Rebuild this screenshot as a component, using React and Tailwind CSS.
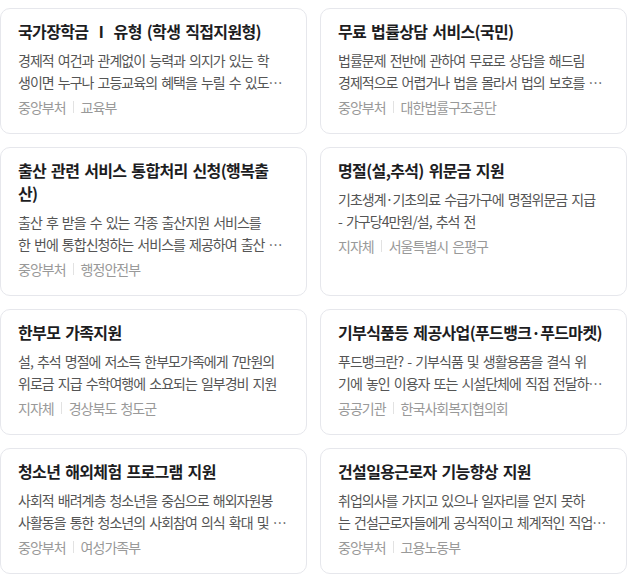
const cards = [
  {
    title: ["국가장학금 Ⅰ 유형 (학생 직접지원형)"],
    body: ["경제적 여건과 관계없이 능력과 의지가 있는 학", "생이면 누구나 고등교육의 혜택을 누릴 수 있도록 국가가 지원하는 장학금"],
    type: "중앙부처",
    org: "교육부",
  },
  {
    title: ["무료 법률상담 서비스(국민)"],
    body: ["법률문제 전반에 관하여 무료로 상담을 해드림", "경제적으로 어렵거나 법을 몰라서 법의 보호를 받지 못하는 국민"],
    type: "중앙부처",
    org: "대한법률구조공단",
  },
  {
    title: ["출산 관련 서비스 통합처리 신청(행복출", "산)"],
    body: ["출산 후 받을 수 있는 각종 출산지원 서비스를", "한 번에 통합신청하는 서비스를 제공하여 출산 가정의 편의를 높임"],
    type: "중앙부처",
    org: "행정안전부",
  },
  {
    title: ["명절(설,추석) 위문금 지원"],
    body: ["기초생계·기초의료 수급가구에 명절위문금 지급", "- 가구당4만원/설, 추석 전"],
    type: "지자체",
    org: "서울특별시 은평구",
  },
  {
    title: ["한부모 가족지원"],
    body: ["설, 추석 명절에 저소득 한부모가족에게 7만원의", "위로금 지급 수학여행에 소요되는 일부경비 지원"],
    type: "지자체",
    org: "경상북도 청도군",
  },
  {
    title: ["기부식품등 제공사업(푸드뱅크·푸드마켓)"],
    body: ["푸드뱅크란? - 기부식품 및 생활용품을 결식 위", "기에 놓인 이용자 또는 시설단체에 직접 전달하는 사업"],
    type: "공공기관",
    org: "한국사회복지협의회",
  },
  {
    title: ["청소년 해외체험 프로그램 지원"],
    body: ["사회적 배려계층 청소년을 중심으로 해외자원봉", "사활동을 통한 청소년의 사회참여 의식 확대 및 글로벌 역량 강화"],
    type: "중앙부처",
    org: "여성가족부",
  },
  {
    title: ["건설일용근로자 기능향상 지원"],
    body: ["취업의사를 가지고 있으나 일자리를 얻지 못하", "는 건설근로자들에게 공식적이고 체계적인 직업훈련 기회 제공"],
    type: "중앙부처",
    org: "고용노동부",
  },
];

function ServiceCard({ title, body, type, org }) {
  return (
    <div className="flex flex-col rounded-[10px] border border-[#e6e7ec] bg-white px-[17px] pt-[11px] pb-4">
      <h3 className="text-[16px] leading-[23px] font-bold tracking-[-0.04em] text-[#1d1d1f]">
        {title.map((t, i) => (
          <span key={i}>
            {i > 0 && <br />}
            <span className="whitespace-nowrap">{t}</span>
          </span>
        ))}
      </h3>

      {/* 2줄 요약 */}
      <p className="mt-[6px] line-clamp-2 text-[14px] leading-[22px] tracking-[-0.07em] text-[#555]">
        <span className="whitespace-nowrap">{body[0]}</span>
        <br />
        {body[1]}
      </p>

      <div className="mt-1 flex items-center text-[14px] leading-5 tracking-[-0.07em] text-[#999]">
        <span>{type}</span>
        <span className="mx-[7px] h-3 w-px bg-[#e2e2e2]" />
        <span>{org}</span>
      </div>
    </div>
  );
}

export default function App() {
  return (
    <div
      className="bg-white pt-2 pb-2 [word-spacing:0.12em]"
      style={{ fontFamily: '"Noto Sans CJK KR", "Noto Sans", sans-serif' }}
    >
      <div className="grid grid-cols-2 gap-[13px]">
        {cards.map((c, i) => (
          <ServiceCard key={i} {...c} />
        ))}
      </div>
    </div>
  );
}
